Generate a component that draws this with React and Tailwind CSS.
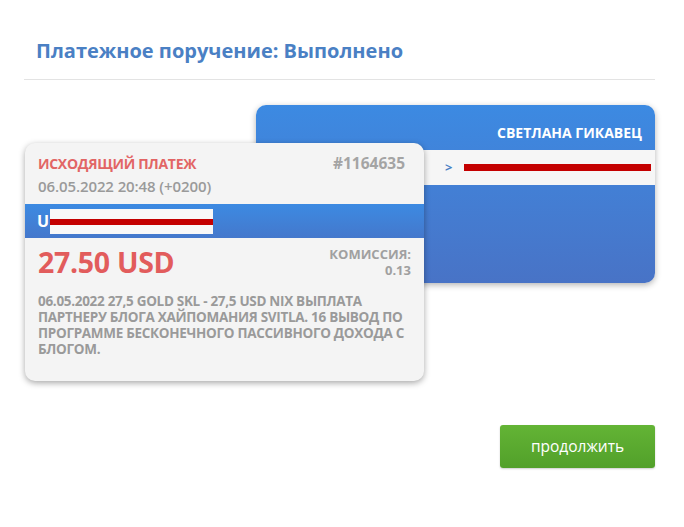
export default function App() {
  return (
    <div className="w-[684px] h-[527px] bg-white relative overflow-hidden" style={{ fontFamily: '"Open Sans", "Noto Sans", sans-serif' }}>
      <div className="ml-[24px] w-[631px] pt-[37px]">
        <h1 className="pl-[12px] text-[20px] font-bold text-[#4a80c4] leading-[27px]">Платежное поручение: Выполнено</h1>
        <div className="mt-[15px] h-px bg-[#e3e3e3]" />
        <div className="relative mt-[25px]">
          <div className="ml-[232px] h-[178px] rounded-[10px] bg-gradient-to-b from-[#3c8ae2] to-[#4873c6] shadow-[0_2px_6px_rgba(0,0,0,0.3)] overflow-hidden">
            <div className="h-[45px] flex items-end justify-end pr-[13px] pb-[7px] text-white text-[14px] font-bold">СВЕТЛАНА ГИКАВЕЦ</div>
            <div className="h-[35px] bg-[#f6f6f6] flex items-center pl-[189px] pr-[4px]">
              <span className="text-[#4a80c4] text-[13px] font-bold">&gt;</span>
              <div className="ml-[12px] flex-1 h-[7px] bg-[#c40000]" />
            </div>
          </div>
          <div className="absolute left-[1px] top-[38px] w-[399px] h-[238px] rounded-[10px] bg-[#f4f4f4] shadow-[0_2px_6px_rgba(0,0,0,0.35)] overflow-hidden">
            <div className="px-[13px] pt-[11px] flex justify-between items-start">
              <div>
                <div className="text-[14px] font-bold text-[#e26565] leading-[19px] tracking-[-0.3px]">ИСХОДЯЩИЙ ПЛАТЕЖ</div>
                <div className="text-[15px] font-semibold text-[#9a9a9a] leading-[19px] mt-[4px] tracking-[-0.1px]">06.05.2022 20:48 (+0200)</div>
              </div>
              <div className="text-[15.5px] font-bold text-[#a4a4a4] leading-[19px] pr-[6px]">#1164635</div>
            </div>
            <div className="mt-[8px] h-[34px] bg-gradient-to-b from-[#3c8ae2] to-[#4478cc] flex items-center pl-[12px]">
              <span className="text-white text-[16px] font-bold">U</span>
              <div className="ml-[1px] w-[163px] h-[25px] bg-[#f8f8f8] flex items-center">
                <div className="w-full h-[6px] mt-[2px] bg-[#c40000]" />
              </div>
            </div>
            <div className="px-[13px] pt-[5px] flex justify-between items-start">
              <div className="text-[28.5px] font-bold text-[#e25c5c] leading-[38px] tracking-[-0.3px]">27.50 USD</div>
              <div className="text-[13px] font-bold text-[#a0a0a0] leading-[16px] text-right pt-[3px]">
                <div>КОМИССИЯ:</div>
                <div>0.13</div>
              </div>
            </div>
            <div className="px-[13px] pt-[12px] text-[13.5px] font-bold text-[#9a9a9a] leading-[16px] tracking-[-0.3px] whitespace-nowrap">
              <div>06.05.2022 27,5 GOLD SKL - 27,5 USD NIX ВЫПЛАТА</div>
              <div>ПАРТНЕРУ БЛОГА ХАЙПОМАНИЯ SVITLA. 16 ВЫВОД ПО</div>
              <div>ПРОГРАММЕ БЕСКОНЕЧНОГО ПАССИВНОГО ДОХОДА С</div>
              <div>БЛОГОМ.</div>
            </div>
          </div>
        </div>
        <div className="mt-[142px] flex justify-end">
          <button className="w-[155px] h-[43px] rounded-[3px] bg-gradient-to-b from-[#63b435] to-[#52a02a] text-white text-[15.5px] font-normal shadow-[0_1px_2px_rgba(0,0,0,0.2)]">продолжить</button>
        </div>
      </div>
    </div>
  );
}
